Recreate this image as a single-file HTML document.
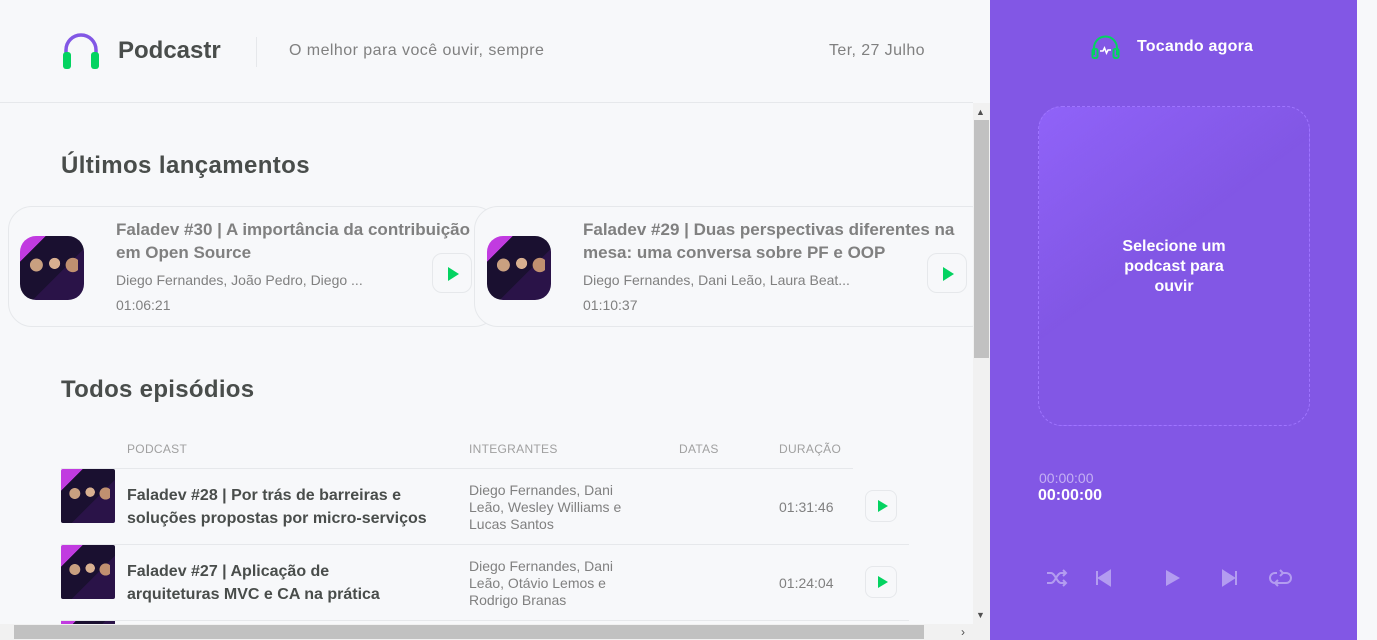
<!DOCTYPE html>
<html><head><meta charset="utf-8"><style>
*{box-sizing:border-box;margin:0;padding:0}
body{width:1377px;height:640px;overflow:hidden;background:#f7f8fa;font-family:"Liberation Sans",sans-serif;position:relative}
.main{position:absolute;left:0;top:0;width:990px;height:640px;background:#f7f8fa;overflow:hidden}
header{position:absolute;left:0;top:0;width:973px;height:103px;border-bottom:1px solid #e6e8eb}
.abs{position:absolute}
.thumb{background:linear-gradient(135deg,#c13be0 0 20%,#1a1030 20% 60%,#2a1348 60%);overflow:hidden}
.thumb:after{content:"";position:absolute;left:10%;top:20%;width:80%;height:50%;background:radial-gradient(circle at 20% 50%,#c9a080 0 14%,transparent 15%),radial-gradient(circle at 55% 45%,#d8b090 0 16%,transparent 17%),radial-gradient(circle at 90% 50%,#c09070 0 14%,transparent 15%)}
.card{position:absolute;top:206px;height:121px;border:1px solid #e6e8eb;border-radius:24px;background:#f7f8fa}
.ct{position:absolute;font-size:17px;font-weight:bold;color:#808080;line-height:23px}
.cm{position:absolute;font-size:14px;color:#808080}
.play{position:absolute;width:40px;height:40px;border:1px solid #e6e8eb;border-radius:10px;background:#f7f8fa}
.play:after{content:"";position:absolute;left:15px;top:13px;border-left:11px solid #04d361;border-top:7px solid transparent;border-bottom:7px solid transparent}
.th{position:absolute;top:442px;font-size:12px;color:#a0a0a0;letter-spacing:.3px}
.rt{position:absolute;font-size:16px;font-weight:bold;color:#494d4b;line-height:23px}
.rm{position:absolute;font-size:14px;color:#808080;line-height:17px}
.sp{position:absolute;width:32px;height:32px;border:1px solid #e6e8eb;border-radius:8px}
.sp:after{content:"";position:absolute;left:12px;top:9px;border-left:10px solid #04d361;border-top:6px solid transparent;border-bottom:6px solid transparent}
.right{position:absolute;left:990px;top:0;width:367px;height:640px;background:#8257e5}
</style></head><body>
<div class="main">
<header>
<svg class="abs" style="left:61px;top:32px" width="40" height="38" viewBox="0 0 40 38"><path d="M5 24 V18 A15 15 0 0 1 35 18 V24" fill="none" stroke="#8257e5" stroke-width="3.5"/><rect x="2" y="20" width="8" height="17" rx="3" fill="#04d361"/><rect x="30" y="20" width="8" height="17" rx="3" fill="#04d361"/></svg>
<div class="abs" style="left:118px;top:37px;font-size:24px;font-weight:bold;color:#494d4b">Podcastr</div>
<div class="abs" style="left:256px;top:37px;width:1px;height:30px;background:#e6e8eb"></div>
<div class="abs" style="left:289px;top:42px;font-size:16px;color:#808080;letter-spacing:.45px">O melhor para você ouvir, sempre</div>
<div class="abs" style="left:829px;top:42px;font-size:16px;color:#808080;letter-spacing:.4px">Ter, 27 Julho</div>
</header>
<div class="abs" style="left:61px;top:152px;font-size:24px;font-weight:bold;color:#494d4b;letter-spacing:.4px">Últimos lançamentos</div>
<div class="card" style="left:8px;width:490px"></div>
<div class="card" style="left:474px;width:520px"></div>
<div class="abs thumb" style="left:20px;top:236px;width:64px;height:64px;border-radius:16px"></div>
<div class="ct" style="left:116px;top:218px;width:360px;white-space:nowrap">Faladev #30 | A importância da contribuição<br>em Open Source</div>
<div class="cm" style="left:116px;top:272px">Diego Fernandes, João Pedro, Diego ...</div>
<div class="cm" style="left:116px;top:297px">01:06:21</div>
<div class="play" style="left:432px;top:253px"></div>
<div class="abs thumb" style="left:487px;top:236px;width:64px;height:64px;border-radius:16px"></div>
<div class="ct" style="left:583px;top:218px;width:380px">Faladev #29 | Duas perspectivas diferentes na mesa: uma conversa sobre PF e OOP</div>
<div class="cm" style="left:583px;top:272px">Diego Fernandes, Dani Leão, Laura Beat...</div>
<div class="cm" style="left:583px;top:297px">01:10:37</div>
<div class="play" style="left:927px;top:253px"></div>
<div class="abs" style="left:61px;top:376px;font-size:24px;font-weight:bold;color:#494d4b;letter-spacing:.3px">Todos episódios</div>
<div class="th" style="left:127px">PODCAST</div>
<div class="th" style="left:469px">INTEGRANTES</div>
<div class="th" style="left:679px">DATAS</div>
<div class="th" style="left:779px">DURAÇÃO</div>
<div class="abs" style="left:61px;top:468px;width:792px;height:1px;background:#e6e8eb"></div>
<div class="abs thumb" style="left:61px;top:469px;width:54px;height:54px;border-radius:2px"></div>
<div class="rt" style="left:127px;top:484px;width:320px">Faladev #28 | Por trás de barreiras e soluções propostas por micro-serviços</div>
<div class="rm" style="left:469px;top:482px;width:170px">Diego Fernandes, Dani Leão, Wesley Williams e Lucas Santos</div>
<div class="rm" style="left:779px;top:499px">01:31:46</div>
<div class="sp" style="left:865px;top:490px"></div>
<div class="abs" style="left:61px;top:544px;width:848px;height:1px;background:#e6e8eb"></div>
<div class="abs thumb" style="left:61px;top:545px;width:54px;height:54px;border-radius:2px"></div>
<div class="rt" style="left:127px;top:560px;width:320px">Faladev #27 | Aplicação de<br>arquiteturas MVC e CA na prática</div>
<div class="rm" style="left:469px;top:558px;width:170px">Diego Fernandes, Dani Leão, Otávio Lemos e Rodrigo Branas</div>
<div class="rm" style="left:779px;top:575px">01:24:04</div>
<div class="sp" style="left:865px;top:566px"></div>
<div class="abs" style="left:61px;top:620px;width:848px;height:1px;background:#e6e8eb"></div>
<div class="abs thumb" style="left:61px;top:621px;width:54px;height:20px"></div>
<div class="abs" style="left:973px;top:103px;width:17px;height:521px;background:#f1f1f1"></div>
<div class="abs" style="left:974px;top:120px;width:15px;height:238px;background:#c1c1c1"></div>
<div class="abs" style="left:976px;top:107px;font-size:9px;color:#505050">▲</div>
<div class="abs" style="left:976px;top:610px;font-size:9px;color:#505050">▼</div>
<div class="abs" style="left:0;top:624px;width:990px;height:16px;background:#f1f1f1"></div>
<div class="abs" style="left:14px;top:625px;width:910px;height:14px;background:#c1c1c1"></div>
<div class="abs" style="left:961px;top:625px;font-size:12px;color:#505050">›</div>
</div>
<div class="right">
<svg class="abs" style="left:101px;top:35px" width="29" height="24" viewBox="0 0 29 24"><path d="M3 20 V13 A11.5 11.5 0 0 1 26 13 V20" fill="none" stroke="#04d361" stroke-width="2"/><rect x="1.5" y="14" width="5" height="9" rx="1.5" fill="none" stroke="#04d361" stroke-width="2"/><rect x="22.5" y="14" width="5" height="9" rx="1.5" fill="none" stroke="#04d361" stroke-width="2"/><path d="M9 16 L12 16 L13.5 13 L15.5 18 L17 15 L20 15" fill="none" stroke="#fff" stroke-width="1.6"/></svg>
<div class="abs" style="left:147px;top:38px;font-size:16px;font-weight:bold;color:#fff;letter-spacing:.2px">Tocando agora</div>
<div class="abs" style="left:48px;top:106px;width:272px;height:320px;border:1.5px dashed #9f75ff;border-radius:24px;background:linear-gradient(143deg,rgba(145,100,250,.9) 0%,rgba(130,87,229,0) 45%)"></div>
<div class="abs" style="left:48px;top:237px;width:272px;text-align:center;font-size:16px;font-weight:bold;color:#fff;line-height:20px">Selecione um<br>podcast para<br>ouvir</div>
<div class="abs" style="left:49px;top:470px;font-size:14px;color:#c4b0f3">00:00:00</div>
<div class="abs" style="left:48px;top:487px;font-size:16px;font-weight:bold;color:#fff">00:00:00</div>
<svg class="abs" style="left:55px;top:566px" width="250" height="24" viewBox="0 0 250 24" fill="none" stroke="#b39cf0" stroke-width="2">
<path d="M2 7 H6 C10 7 12 17 16 17 H21 M2 17 H6 C10 17 12 7 16 7 H21 M18 4 L21 7 L18 10 M18 14 L21 17 L18 20"/>
<path d="M52 5 V19" /><path d="M65 5 L54 12 L65 19Z" fill="#b39cf0"/>
<path d="M121 4 L135 12 L121 20Z" fill="#b39cf0" stroke="none"/>
<path d="M178 5 L189 12 L178 19Z" fill="#b39cf0"/><path d="M191 5 V19"/>
<path d="M238 7 H241 A5 5 0 0 1 241 17 H230 A5 5 0 0 1 230 7 H232 M235 4 L238 7 L235 10 M233 14 L230 17 L233 20"/>
</svg>
</div>
</body></html>
